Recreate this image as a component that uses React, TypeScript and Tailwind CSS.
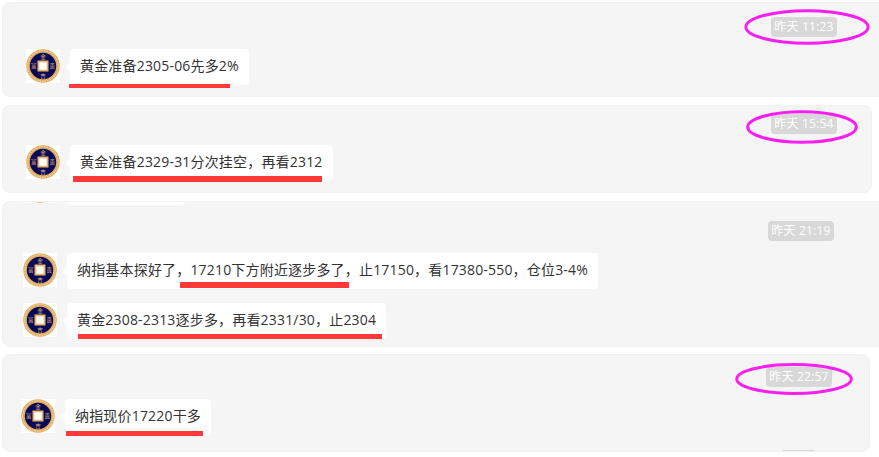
function CoinAvatar({ blank }: { blank?: boolean }) {
  return (
    <div className="h-[34px] w-[34px] shrink-0 bg-white">
      <svg viewBox="0 0 34 34" className="h-full w-full">
        <circle cx="17" cy="17" r="16.8" fill="#dfae62" />
        <circle cx="17" cy="17" r="15.3" fill="none" stroke="#f0d29c" strokeWidth="1.2" strokeDasharray="1.6 1" />
        <circle cx="17" cy="17" r="13.2" fill="#0a0958" />
        <rect x="11.5" y="11.5" width="11" height="11" fill="#e3b66e" />
        <rect x="13.3" y="13.3" width="7.4" height="7.4" fill="#ffffff" />
        {!blank && (
          <g fill="#e0bd7c" fontSize="5.5" textAnchor="middle" fontFamily="'Noto Sans CJK SC', sans-serif">
            <text x="17" y="9.5">金</text>
            <text x="17" y="29">吉</text>
            <text x="7.8" y="19">富</text>
            <text x="26.2" y="19">贵</text>
          </g>
        )}
      </svg>
    </div>
  )
}

function Oval({ className }: { className: string }) {
  return (
    <svg viewBox="0 0 100 100" preserveAspectRatio="none" className={"absolute " + className}>
      <ellipse
        cx="50"
        cy="50"
        rx="48.5"
        ry="45"
        fill="none"
        stroke="#f81ff0"
        strokeWidth="3"
        vectorEffect="non-scaling-stroke"
      />
    </svg>
  )
}

function TimeChip({ time, oval }: { time: string; oval?: string }) {
  return (
    <div className="flex justify-end">
      <div className="relative flex h-5 w-[66px] items-center justify-center whitespace-nowrap rounded-sm bg-[#d8d8d8] text-xs tracking-[0.2px] text-white">
        {time}
        {oval && <Oval className={oval} />}
      </div>
    </div>
  )
}

function Message({ text, line, className }: { text: string; line: string; className: string }) {
  return (
    <div className={"flex items-start gap-2.5 " + className}>
      <CoinAvatar />
      <div className="relative flex h-9 items-center whitespace-nowrap rounded bg-white px-2.5 pb-0.5 text-sm tracking-[0.18px] text-[#333]">
        <div className="absolute -left-[3px] top-[14px] h-2 w-2 rotate-45 bg-white" />
        <span className="relative">{text}</span>
        <div className={"absolute bg-[#ff3838] " + line} />
      </div>
    </div>
  )
}

export default function App() {
  return (
    <div className="h-[457px] w-[879px] overflow-hidden bg-white font-['Open_Sans','Noto_Sans_CJK_SC',sans-serif]">
      <div className="-mr-[8px] ml-[2px] mt-[2px] overflow-hidden rounded-lg border border-[#f1f1f1] bg-[#f5f5f5] pb-[11px] pl-[23px] pr-[49px] pt-[14px]">
        <TimeChip time="昨天 11:23" oval="-left-[27px] -top-[8px] h-[36px] w-[126px]" />
        <Message
          className="mt-3"
          text="黄金准备2305-06先多2%"
          line="-left-px top-[35px] h-1 w-[161px]"
        />
      </div>

      <div className="ml-[2px] mr-[7px] mt-2 overflow-hidden rounded-lg border border-[#f1f1f1] bg-[#f5f5f5] pb-[11px] pl-[23px] pr-[34px] pt-2">
        <TimeChip time="昨天 15:54" oval="-left-[25px] -top-[4px] h-[34px] w-[112px]" />
        <Message
          className="mt-[11px]"
          text="黄金准备2329-31分次挂空，再看2312"
          line="left-[3px] top-[31px] h-[6px] w-[249px]"
        />
      </div>

      <div className="-mr-[8px] ml-[2px] mt-2 overflow-hidden rounded-lg border border-[#f1f1f1] bg-[#f5f5f5] pb-[7px] pl-5 pr-[52px]">
        {/* tail of the previous message, scrolled under the panel edge */}
        <div className="-mt-[33px] flex items-start gap-2.5">
          <CoinAvatar blank />
          <div className="h-9 w-[118px] rounded bg-white" />
        </div>
        <div className="mt-4">
          <TimeChip time="昨天 21:19" />
        </div>
        <Message
          className="mt-3"
          text="纳指基本探好了，17210下方附近逐步多了，止17150，看17380-550，仓位3-4%"
          line="left-[113px] top-[29px] h-[6px] w-[169px]"
        />
        <Message
          className="mt-[14px]"
          text="黄金2308-2313逐步多，再看2331/30，止2304"
          line="left-[11px] top-[31px] h-[5px] w-[304px]"
        />
      </div>

      <div className="ml-[2px] mr-[9px] mt-[7px] h-[98px] overflow-hidden rounded-lg border border-[#f1f1f1] bg-[#f5f5f5] pl-[18px] pr-[37px] pt-3">
        <TimeChip time="昨天 22:57" oval="-left-[31px] -top-[4px] h-[32px] w-[118px]" />
        <Message
          className="mt-3"
          text="纳指现价17220干多"
          line="left-px top-[32px] h-[5px] w-[137px]"
        />
        <div className="mr-[17px] mt-[15px] flex justify-end">
          <div className="h-5 w-8 bg-[#d8d8d8]" />
        </div>
      </div>
    </div>
  )
}
